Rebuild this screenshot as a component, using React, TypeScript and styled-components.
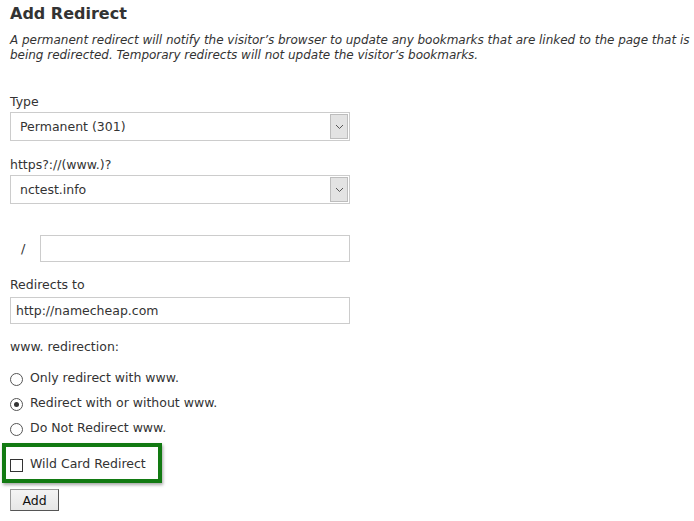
import React from "react";
import styled, { createGlobalStyle } from "styled-components";

const Global = createGlobalStyle`
  html, body { margin: 0; padding: 0; background: #fff; }
  body { font-family: "DejaVu Sans", Verdana, sans-serif; color: #333; }
`;

const Page = styled.div`
  padding: 3px 10px 0 10px;
  width: 694px;
  box-sizing: border-box;
  overflow: hidden;
`;

const Title = styled.h2`
  margin: 0;
  font-size: 16px;
  font-weight: bold;
  line-height: 22px;
  color: #333;
`;

const Description = styled.p`
  margin: 8px 0 0 0;
  font-size: 12px;
  font-style: italic;
  line-height: 15px;
  white-space: nowrap;
  letter-spacing: -0.02px;
  color: #333;
`;

const Field = styled.div<{ $top: number }>`
  display: flex;
  flex-direction: column;
  margin-top: ${(p) => p.$top}px;
`;

const Label = styled.div<{ $mb?: number }>`
  font-size: 12.5px;
  line-height: 15px;
  margin-bottom: ${(p) => p.$mb ?? 3}px;
`;

const SelectBox = styled.div`
  width: 340px;
  height: 29px;
  box-sizing: border-box;
  border: 1px solid #ccc;
  display: flex;
  align-items: stretch;
  background: #fff;
`;

const SelectValue = styled.div`
  flex: 1;
  display: flex;
  align-items: center;
  padding-left: 9px;
  font-size: 12.5px;
`;

const SelectArrow = styled.div`
  width: 16px;
  margin: 1px;
  background: #e3e3e3;
  border: 1px solid #bdbdbd;
  display: flex;
  align-items: center;
  justify-content: center;
`;

const TextInput = styled.div<{ $w: number }>`
  width: ${(p) => p.$w}px;
  height: 27px;
  box-sizing: border-box;
  border: 1px solid #ccc;
  font-size: 12.5px;
  display: flex;
  align-items: center;
  padding-left: 5px;
`;

const PathRow = styled.div`
  display: flex;
  align-items: center;
  margin-top: 31px;
`;

const Slash = styled.span`
  width: 30px;
  padding-left: 11px;
  box-sizing: border-box;
  font-size: 13px;
`;

const Radios = styled.div`
  display: flex;
  flex-direction: column;
  gap: 8px;
  margin-top: 12px;
`;

const RadioRow = styled.div`
  display: flex;
  align-items: center;
  font-size: 12.5px;
  line-height: 15px;
`;

const RadioCircle = styled.span<{ $on?: boolean }>`
  width: 11px;
  height: 11px;
  border-radius: 50%;
  border: 1px solid #555;
  margin: 4px 7px 0 0;
  display: inline-flex;
  align-items: center;
  justify-content: center;
  &::after {
    content: "";
    width: 5px;
    height: 5px;
    border-radius: 50%;
    background: ${(p) => (p.$on ? "#333" : "transparent")};
  }
`;

const Highlight = styled.div`
  margin: 7px 0 0 -8px;
  width: 160px;
  height: 40px;
  box-sizing: border-box;
  border: 4px solid #127a12;
  box-shadow: 1px 2px 3px rgba(0, 0, 0, 0.35);
  display: flex;
  align-items: center;
  padding-left: 4px;
  font-size: 12.5px;
`;

const CheckBox = styled.span`
  width: 11px;
  height: 11px;
  border: 1px solid #333;
  margin: 4px 7px 0 0;
`;

const Button = styled.button`
  margin-top: 6px;
  width: 49px;
  height: 22px;
  font-family: "DejaVu Sans", Verdana, sans-serif;
  font-size: 12.5px;
  color: #111;
  background: linear-gradient(#f4f4f4, #e6e6e6);
  border: 1px solid #999;
  border-right-color: #555;
  border-bottom-color: #555;
  padding: 0;
`;

const Chevron = () => (
  <svg width="9" height="6" viewBox="0 0 9 6">
    <path d="M1 1 L4.5 4.5 L8 1" fill="none" stroke="#555" strokeWidth="1" />
  </svg>
);

export default function App() {
  return (
    <Page>
      <Global />
      <Title>Add Redirect</Title>
      <Description>
        A permanent redirect will notify the visitor’s browser to update any bookmarks that are linked to the page that is
        <br />
        being redirected. Temporary redirects will not update the visitor’s bookmarks.
      </Description>
      <Field $top={31}>
        <Label>Type</Label>
        <SelectBox>
          <SelectValue>Permanent (301)</SelectValue>
          <SelectArrow>
            <Chevron />
          </SelectArrow>
        </SelectBox>
      </Field>
      <Field $top={16}>
        <Label>https?://(www.)?</Label>
        <SelectBox>
          <SelectValue>nctest.info</SelectValue>
          <SelectArrow>
            <Chevron />
          </SelectArrow>
        </SelectBox>
      </Field>
      <PathRow>
        <Slash>/</Slash>
        <TextInput $w={310} />
      </PathRow>
      <Field $top={15}>
        <Label $mb={5}>Redirects to</Label>
        <TextInput $w={340}>http://namecheap.com</TextInput>
      </Field>
      <Field $top={15}>
        <Label>www. redirection:</Label>
      </Field>
      <Radios>
        <RadioRow>
          <RadioCircle />
          Only redirect with www.
        </RadioRow>
        <RadioRow>
          <RadioCircle $on />
          Redirect with or without www.
        </RadioRow>
        <RadioRow>
          <RadioCircle />
          Do Not Redirect www.
        </RadioRow>
      </Radios>
      <Highlight>
        <CheckBox />
        Wild Card Redirect
      </Highlight>
      <Button>Add</Button>
    </Page>
  );
}
